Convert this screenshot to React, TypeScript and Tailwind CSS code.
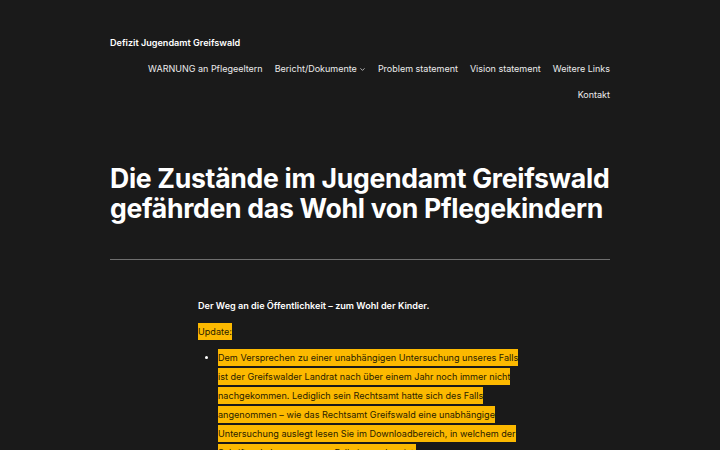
import { ChevronDown } from 'lucide-react'

const items = [
  'Dem Versprechen zu einer unabhängigen Untersuchung unseres Falls ist der Greifswalder Landrat nach über einem Jahr noch immer nicht nachgekommen. Lediglich sein Rechtsamt hatte sich des Falls angenommen – wie das Rechtsamt Greifswald eine unabhängige Untersuchung auslegt lesen Sie im Downloadbereich, in welchem der Schriftverkehr zu unserem Fall einzusehen ist.',
  'Eine Beschwerde dazu liegt seit mittlerweile vier Monaten bei der Kommunalaufsicht des Landes Mecklenburg-Vorpommern.',
]

export default function App() {
  return (
    <div className="min-h-[450px] bg-[#1a1a1a] text-white font-['Inter','Noto_Sans',sans-serif]">
      <div className="w-[500px] mx-auto pt-[34px]">
        {/* Header */}
        <div className="text-[9.1px] font-semibold leading-[18px]">Defizit Jugendamt Greifswald</div>
        <nav className="w-[500px] mt-[8px] flex flex-wrap justify-end gap-x-3 gap-y-2 text-[9px] leading-[18px] text-[#ececec]">
          <span>WARNUNG an Pflegeeltern</span>
          <span className="flex items-center">
            Bericht/Dokumente
            <ChevronDown className="w-[7px] h-[7px] ml-[2px]" strokeWidth={2.5} />
          </span>
          <span>Problem statement</span>
          <span>Vision statement</span>
          <span>Weitere Links</span>
          <span>Kontakt</span>
        </nav>

        {/* Title */}
        <h1 className="w-[520px] mt-[59px] text-[26.6px] font-bold leading-[30px] tracking-[-0.3px]">
          Die Zustände im Jugendamt Greifswald gefährden das Wohl von Pflegekindern
        </h1>

        <hr className="mt-[36px] border-0 border-t border-[#6f6f6f]" />

        {/* Content */}
        <div className="w-[325px] ml-[88px] mt-[36px] text-[9.1px] leading-[19px]">
          <p className="font-semibold">Der Weg an die Öffentlichkeit – zum Wohl der Kinder.</p>
          <p className="mt-[7px]">
            <mark className="bg-[#fcb900] text-[#2a2100] py-[3px]">Update:</mark>
          </p>
          <ul className="mt-[7px] pl-5 list-disc">
            {items.map((t, i) => (
              <li key={i}>
                <mark className="bg-[#fcb900] text-[#2a2100] py-[3px]">{t}</mark>
              </li>
            ))}
          </ul>
        </div>
      </div>
    </div>
  )
}
